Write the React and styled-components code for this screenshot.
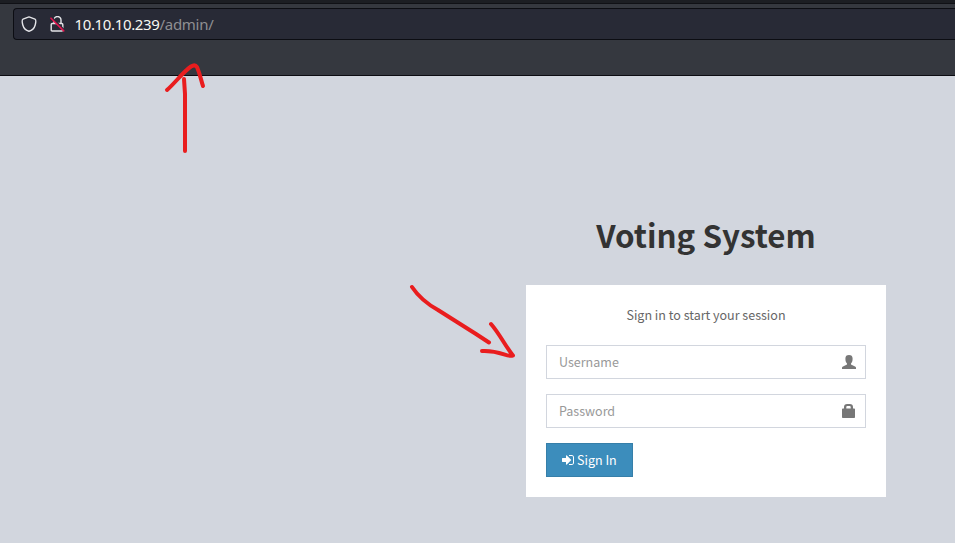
import React from "react";
import styled, { createGlobalStyle } from "styled-components";

const GlobalStyle = createGlobalStyle`
  * { box-sizing: border-box; }
  body { margin: 0; overflow: hidden; background: #d2d6de; }
`;

const Screen = styled.div`
  position: relative;
  height: 543px;
  overflow: hidden;
  background: #d2d6de;
  font-family: "Noto Sans CJK SC", "Noto Sans", sans-serif;
`;

const TabStrip = styled.div`
  height: 4px;
  background: #1c1e23;
  border-bottom: 1px solid #101116;
`;

const Toolbar = styled.header`
  height: 72px;
  padding: 4px 0 0 13px;
  background: #35383f;
  border-bottom: 1px solid #0c0c12;
`;

const AddressBar = styled.div`
  display: flex;
  align-items: center;
  height: 32px;
  padding-left: 7px;
  background: #282a36;
  border: 1px solid #0c0d13;
  border-right: 0;
  border-radius: 4px 0 0 4px;
`;

const ToolbarIcon = styled.svg`
  width: 16px;
  height: 16px;
  margin-right: 12px;
  fill: none;
  stroke: #e4e4e8;
  stroke-width: 1.4;
  stroke-linecap: round;
  stroke-linejoin: round;
`;

const Address = styled.div`
  margin-left: -2.5px;
  font: 15px/20px "Noto Sans", sans-serif;
  letter-spacing: -0.36px;
  color: #f8f8f2;
  white-space: nowrap;
`;

const Path = styled.span`
  letter-spacing: -0.28px;
  color: #8f8f92;
`;

const Login = styled.main`
  width: 360px;
  margin: 134px 0 0 526px;
`;

const Title = styled.h1`
  margin: 0;
  height: 75px;
  font-size: 31.35px;
  line-height: 50px;
  font-weight: 700;
  text-align: center;
  color: #333;
  white-space: nowrap;
`;

const Card = styled.form`
  height: 212px;
  padding: 20px;
  background: #fff;
`;

const Message = styled.p`
  margin: 0 0 20px;
  font-size: 12.53px;
  line-height: 20px;
  text-align: center;
  color: #666;
`;

const Field = styled.label`
  display: flex;
  align-items: center;
  height: 34px;
  margin-bottom: 15px;
  padding: 0 9px 0 12px;
  border: 1px solid #d2d6de;
`;

const Input = styled.input`
  flex: 1;
  min-width: 0;
  padding: 0;
  border: 0;
  outline: 0;
  background: transparent;
  font: 12.53px/20px "Noto Sans CJK SC", sans-serif;
  color: #555;
  &::placeholder { color: #999; opacity: 1; }
`;

const FieldIcon = styled.svg`
  width: 14px;
  height: 14px;
  fill: #777;
`;

const SubmitButton = styled.button`
  display: flex;
  align-items: center;
  gap: 3px;
  width: 87px;
  height: 34px;
  padding: 0 0 0 15px;
  border: 1px solid #367fa9;
  background: #3c8dbc;
  color: #fff;
  font: 12.53px/20px "Noto Sans CJK SC", sans-serif;
  white-space: nowrap;
`;

const SignInIcon = styled.svg`
  width: 12px;
  height: 14px;
  fill: currentColor;
`;

const Annotations = styled.svg`
  position: absolute;
  inset: 0;
  pointer-events: none;
  fill: none;
  stroke: #e91d1e;
  stroke-width: 4;
  stroke-linecap: round;
  stroke-linejoin: round;
`;

export default function App() {
  return (
    <Screen>
      <GlobalStyle />
      <TabStrip />
      <Toolbar>
        <AddressBar>
          <ToolbarIcon viewBox="0 0 16 16">
            <path d="M8 .9 14 3.2C14.9 3.6 14.8 6.7 14.2 9C13.4 11.9 10.7 14.6 8 15.2C5.3 14.6 2.6 11.9 1.8 9C1.2 6.7 1.1 3.6 2 3.2Z" />
          </ToolbarIcon>
          <ToolbarIcon viewBox="0 0 16 16">
            <path d="M5 7V4a3.5 3.5 0 0 1 7 0v3M3.2 7.5h9.6q1 0 1 1v5.5q0 1-1 1H3.2q-1 0-1-1V8.5q0-1 1-1Z" />
            <path d="M3 1.8 15.5 14.3" stroke="#282a36" strokeWidth="2" />
            <path d="M2 2.2 14.7 14.9" stroke="#e31650" strokeWidth="1.6" />
          </ToolbarIcon>
          <Address>10.10.10.239<Path>/admin/</Path></Address>
        </AddressBar>
      </Toolbar>
      <Login>
        <Title>Voting System</Title>
        <Card onSubmit={(event) => event.preventDefault()}>
          <Message>Sign in to start your session</Message>
          <Field>
            <Input placeholder="Username" aria-label="Username" />
            <FieldIcon viewBox="0 0 14 14">
              <path d="M7 0C9.300 0 10.600 1.200 10.600 3.400C10.600 5.800 10.200 7.300 9 8.400V9.600L13 11.400Q14 11.900 14 12.700V14H0v-1.300Q0 11.900 1 11.400L5 9.600V8.400C3.800 7.300 3.400 5.800 3.400 3.400C3.400 1.200 4.700 0 7 0Z" />
            </FieldIcon>
          </Field>
          <Field>
            <Input type="password" placeholder="Password" aria-label="Password" />
            <FieldIcon viewBox="0 0 14 14">
              <path fillRule="evenodd" d="M2 4.500V3Q2 0 5.200 0h2.600Q11 0 11 3V4.500h1.200q.8 0 .8.8v7.900q0 .8-.8.8H.8q-.8 0-.8-.8V5.300q0-.8.8-.8ZM4.300 4.500h4.400V3q0-1-1-1h-2.400q-1 0-1 1Z" />
            </FieldIcon>
          </Field>
          <SubmitButton>
            <SignInIcon viewBox="0 0 1536 1792">
              <path d="M1184 896q0 26-19 45l-544 544q-19 19-45 19t-45-19-19-45v-288h-448q-26 0-45-19t-19-45v-384q0-26 19-45t45-19h448v-288q0-26 19-45t45-19 45 19l544 544q19 19 19 45zm352-352v704q0 119-84.500 203.500t-203.500 84.500h-320q-13 0-22.500-9.500t-9.500-22.500q0-4-1-20t-.5-26.500 3-23.500 10-19.500 20.500-6.500h320q66 0 113-47t47-113v-704q0-66-47-113t-113-47h-312l-11.500-1-11.500-3-8-5.500-7-9-2-13.500q0-4-1-20t-.5-26.500 3-23.500 10-19.500 20.500-6.500h320q119 0 203.500 84.500t84.500 203.500z" />
            </SignInIcon>
            Sign In
          </SubmitButton>
        </Card>
      </Login>
      <Annotations width="955" height="543" viewBox="0 0 955 543">
        <path d="M185 151V94L184 79M167 90C175 83 183 72 191 66.500Q195 64 197 67C200 74 201 80 203 86" />
        <path d="M412 287C418 296 429 305 438 310L476 334L489 342.500M491 324C499 333 506 347 513 355.500C507 358 501 350 482 351" />
      </Annotations>
    </Screen>
  );
}
